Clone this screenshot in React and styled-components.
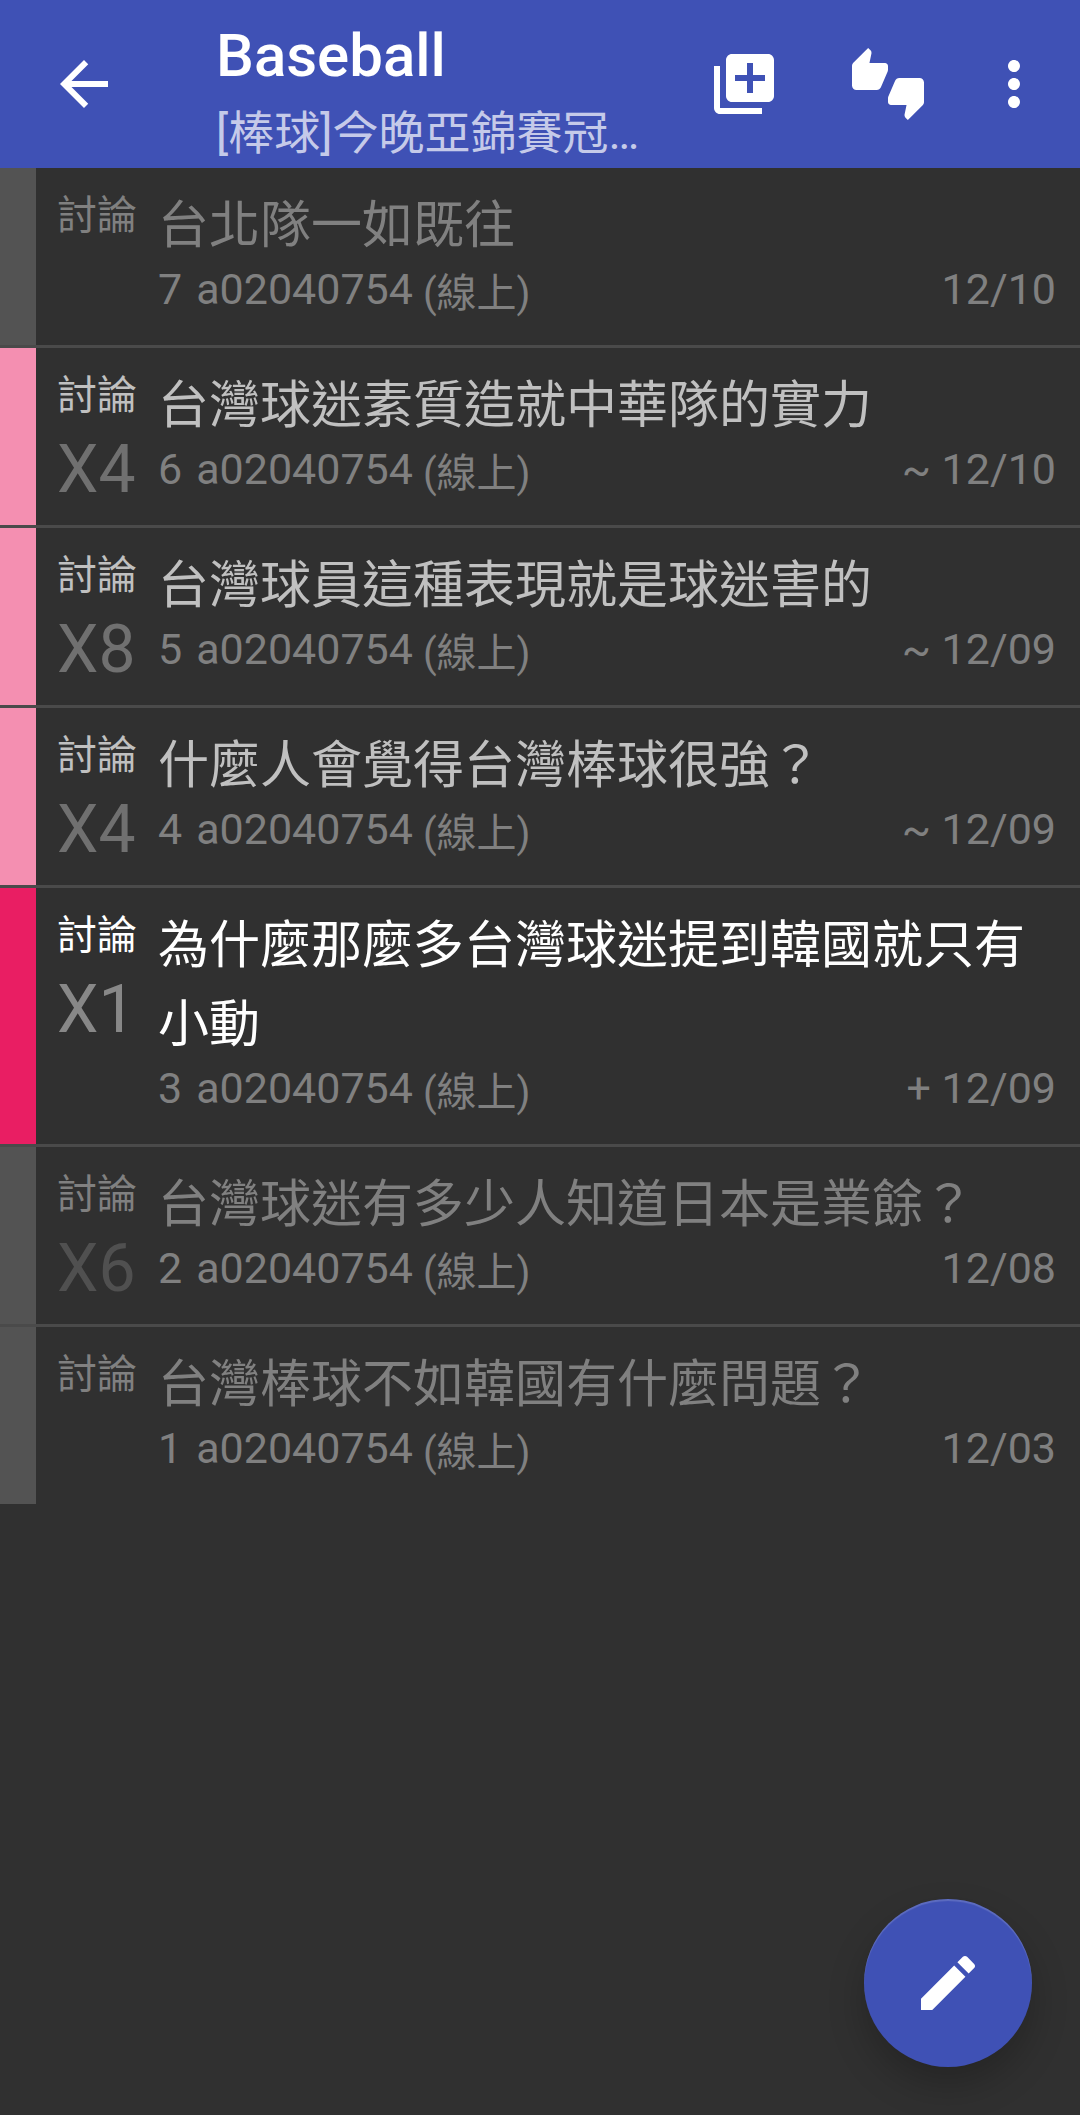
import styled, { createGlobalStyle } from "styled-components"

const GlobalStyle = createGlobalStyle`
    * {
        box-sizing: border-box;
    }

    body {
        margin: 0;
        background: #303030;
        color: #ffffff;
        font-family: Roboto, "Noto Sans CJK TC", sans-serif;
    }
`

const icons = {
    back: "M20 11H7.83l5.59-5.59L12 4l-8 8 8 8 1.41-1.41L7.83 13H20v-2z",
    libraryAdd:
        "M4 6H2v14c0 1.1.9 2 2 2h14v-2H4V6zm16-4H8c-1.1 0-2 .9-2 2v12c0 1.1.9 2 2 2h12c1.1 0 2-.9 2-2V4c0-1.1-.9-2-2-2zm-1 9h-4v4h-2v-4H9V9h4V5h2v4h4v2z",
    thumbs: "M12 6c0-.55-.45-1-1-1H5.82l.66-3.18.02-.23c0-.31-.13-.59-.33-.8L5.38 0 .44 4.94C.17 5.21 0 5.59 0 6v6.5c0 .83.67 1.5 1.5 1.5h6.75c.62 0 1.15-.38 1.38-.91l2.26-5.29c.07-.17.11-.36.11-.55V6zm10.5 4h-6.75c-.62 0-1.15.38-1.38.91l-2.26 5.29c-.07.17-.11.36-.11.55V18c0 .55.45 1 1 1h5.18l-.66 3.18-.02.24c0 .31.13.59.33.8l.79.78 4.94-4.94c.27-.27.44-.65.44-1.06v-6.5c0-.83-.67-1.5-1.5-1.5z",
    more: "M12 8c1.1 0 2-.9 2-2s-.9-2-2-2-2 .9-2 2 .9 2 2 2zm0 2c-1.1 0-2 .9-2 2s.9 2 2 2 2-.9 2-2-.9-2-2-2zm0 6c-1.1 0-2 .9-2 2s.9 2 2 2 2-.9 2-2-.9-2-2-2z",
    edit: "M3 17.25V21h3.75L17.81 9.94l-3.75-3.75L3 17.25zM20.71 7.04c.39-.39.39-1.02 0-1.41l-2.34-2.34c-.39-.39-1.02-.39-1.41 0l-1.83 1.83 3.75 3.75 1.83-1.83z",
}

const posts = [
    { id: 7, title: "台北隊一如既往", date: "12/10", level: "read" },
    { id: 6, title: "台灣球迷素質造就中華隊的實力", date: "~ 12/10", count: "X4", level: "seen" },
    { id: 5, title: "台灣球員這種表現就是球迷害的", date: "~ 12/09", count: "X8", level: "seen" },
    { id: 4, title: "什麼人會覺得台灣棒球很強？", date: "~ 12/09", count: "X4", level: "seen" },
    { id: 3, title: "為什麼那麼多台灣球迷提到韓國就只有小動", date: "+ 12/09", count: "X1", level: "fresh" },
    { id: 2, title: "台灣球迷有多少人知道日本是業餘？", date: "12/08", count: "X6", level: "read" },
    { id: 1, title: "台灣棒球不如韓國有什麼問題？", date: "12/03", level: "read" },
]

const levels = {
    read: { bar: "#535353", text: "#808080", count: "#505050" },
    seen: { bar: "#f48fb1", text: "#c0c0c0", count: "#707070" },
    fresh: { bar: "#e91e63", text: "#ffffff", count: "#888888" },
}

const Toolbar = styled.header`
    display: flex;
    align-items: center;
    height: 168px;
    padding: 0 12px;
    background: #3f51b5;
`

const IconButton = styled.button`
    display: flex;
    flex: none;
    align-items: center;
    justify-content: center;
    width: ${({ $narrow }) => ($narrow ? 108 : 144)}px;
    height: 144px;
    padding: 0;
    border: 0;
    background: none;
    color: inherit;
    cursor: pointer;
`

const Svg = styled.svg`
    display: block;
    width: 72px;
    height: 72px;
    fill: currentColor;
`

const Heading = styled.div`
    flex: 1;
    min-width: 0;
    padding: 18px 0 0 60px;
`

const Title = styled.h1`
    margin: 0;
    font-size: 60px;
    font-weight: 500;
    line-height: 80px;
`

const Subtitle = styled.p`
    margin: 0;
    overflow: hidden;
    color: #c5cae9;
    font-size: 46px;
    line-height: 74px;
    text-overflow: ellipsis;
    white-space: nowrap;
`

const List = styled.ul`
    margin: 0;
    padding: 0;
    list-style: none;
`

const Item = styled.li`
    & + & {
        border-top: 3px solid #4a4a4a;
    }
`

const Row = styled.a`
    display: flex;
    border-left: 36px solid ${({ $level }) => levels[$level].bar};
    padding: 18px 24px 31px 21px;
    color: ${({ $level }) => levels[$level].text};
    text-decoration: none;
`

const Side = styled.div`
    flex: none;
    width: 101px;
`

const Category = styled.div`
    font-size: 40px;
    line-height: 60px;
`

const Count = styled.div`
    height: 60px;
    margin-top: 2px;
    color: ${({ $level }) => levels[$level].count};
    font-size: 66px;
    line-height: 84px;
`

const Main = styled.div`
    flex: 1;
    min-width: 0;
`

const PostTitle = styled.div`
    font-size: 51px;
    line-height: 79px;
`

const Meta = styled.div`
    display: flex;
    height: 49px;
    color: #808080;
    font-size: 43px;
    line-height: 49px;
`

const Author = styled.span`
    margin-left: 14px;
`

const Status = styled.span`
    margin-left: 10px;
    font-size: 40px;
    line-height: 58px;
`

const PostDate = styled.span`
    margin-left: auto;
`

const Fab = styled.button`
    position: fixed;
    right: 48px;
    bottom: 48px;
    display: flex;
    align-items: center;
    justify-content: center;
    width: 168px;
    height: 168px;
    padding: 0;
    border: 0;
    border-radius: 50%;
    background: #3f51b5;
    box-shadow: 0 18px 36px rgba(0, 0, 0, 0.22),
        inset 0 2px 1px rgba(255, 255, 255, 0.16);
    color: #ffffff;
    cursor: pointer;
`

const Icon = ({ name }) => (
    <Svg viewBox='0 0 24 24' aria-hidden='true'>
        <path d={icons[name]} />
    </Svg>
)

const Post = ({ id, title, date, count, level }) => {
    return (
        <Item>
            <Row href={`#${id}`} $level={level}>
                <Side>
                    <Category>討論</Category>
                    {count && <Count $level={level}>{count}</Count>}
                </Side>
                <Main>
                    <PostTitle>{title}</PostTitle>
                    <Meta>
                        <span>{id}</span>
                        <Author>a02040754</Author>
                        <Status>(線上)</Status>
                        <PostDate>{date}</PostDate>
                    </Meta>
                </Main>
            </Row>
        </Item>
    )
}

export default function App() {
    return (
        <div lang='zh-TW'>
            <GlobalStyle />
            <Toolbar>
                <IconButton aria-label='返回'>
                    <Icon name='back' />
                </IconButton>
                <Heading>
                    <Title>Baseball</Title>
                    <Subtitle>[棒球]今晚亞錦賽冠…</Subtitle>
                </Heading>
                <IconButton aria-label='加入'>
                    <Icon name='libraryAdd' />
                </IconButton>
                <IconButton aria-label='評分'>
                    <Icon name='thumbs' />
                </IconButton>
                <IconButton $narrow aria-label='更多'>
                    <Icon name='more' />
                </IconButton>
            </Toolbar>
            <List>
                {posts.map((post) => (
                    <Post key={post.id} {...post} />
                ))}
            </List>
            <Fab aria-label='發文'>
                <Icon name='edit' />
            </Fab>
        </div>
    )
}
